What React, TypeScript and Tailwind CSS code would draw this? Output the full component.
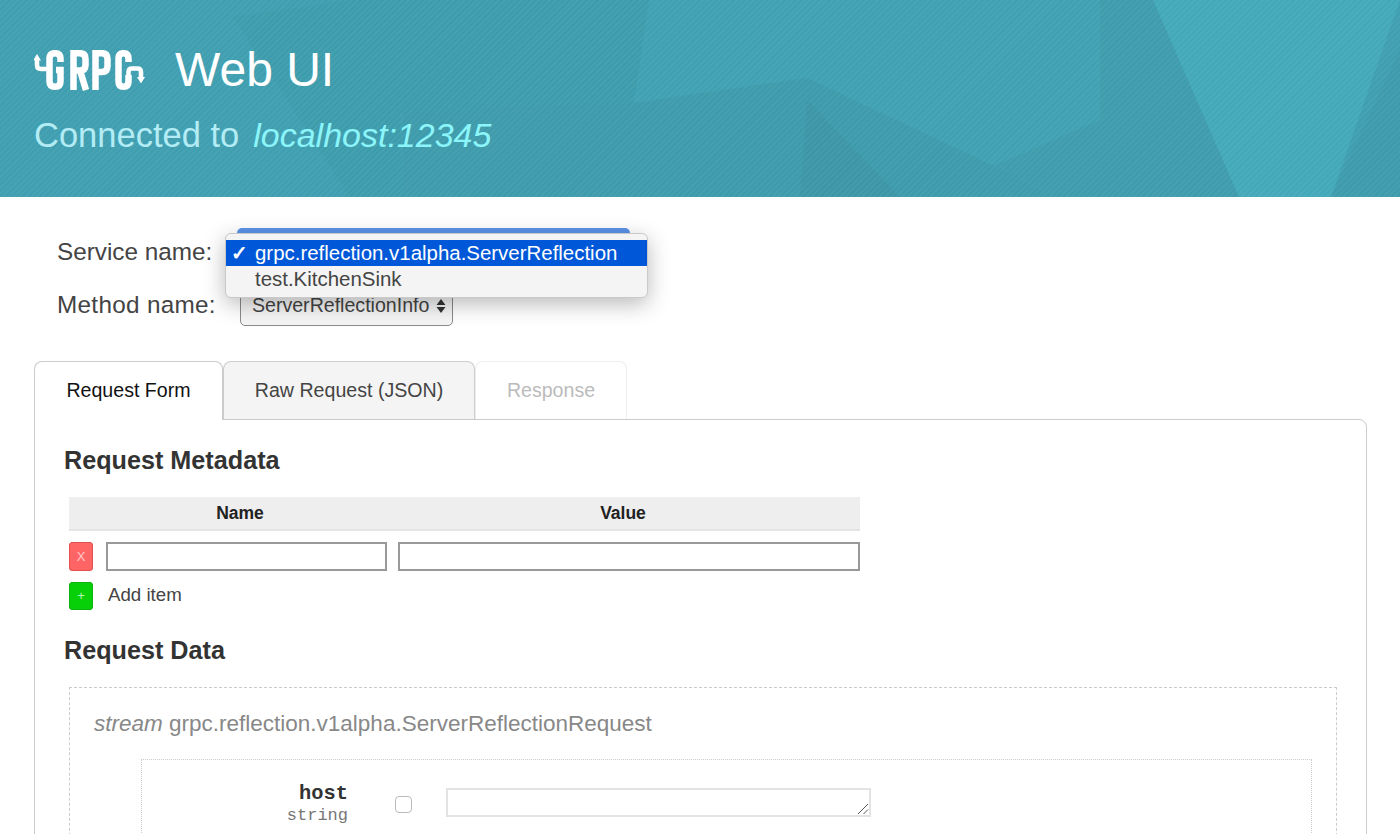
const SANS = "font-['Liberation_Sans',Arial,sans-serif]"

function GrpcLogo() {
  return (
    <svg width="112" height="41" viewBox="0 0 112 41" className="shrink-0">
      <g fill="none" stroke="#fff" strokeWidth="6.5">
        <path d="M3 10V15Q3 19 7 19H15" strokeWidth="4.5" />
        <path d="M26.5 12V8.5Q26.5 3.2 21 3.2Q15.5 3.2 15.5 8.5V31.5Q15.5 36.8 21 36.8Q26.5 36.8 26.5 31.5V20H22" />
        <path d="M39.5 40V3.2H46Q51.5 3.2 51.5 9V15Q51.5 20.5 46 20.5H39.5M46 20.5L52 40" />
        <path d="M61.5 40V3.2H68Q73.5 3.2 73.5 9V16Q73.5 22 68 22H61.5" />
        <path d="M94.5 12V8.5Q94.5 3.2 89.5 3.2Q84.5 3.2 84.5 8.5V31.5Q84.5 36.8 89.5 36.8Q94.5 36.8 94.5 31.5V25" />
        <path d="M94.5 26V22Q94.5 18.5 98 18.5H103.5Q107 18.5 107 22V27" strokeWidth="4.5" />
      </g>
      <path d="M-1 10.5H7L3 4ZM103 27H111L107 33.5Z" fill="#fff" />
    </svg>
  )
}

function HeaderBackdrop() {
  return (
    <svg className="absolute inset-0" width="1400" height="197" viewBox="0 0 1400 197">
      <rect width="1400" height="197" fill="#3f9fb0" />
      <polygon points="233,17 353,0 649,0 634,103 400,113 403,197 350,197" fill="#3d9cac" />
      <polygon points="649,0 1100,0 1100,120 994,166 807,78 634,103" fill="#40a1b2" />
      <polygon points="1100,0 1153,0 1239,197 1050,197 994,166 1100,120" fill="#3e9cac" />
      <polygon points="403,113 634,103 807,78 994,166 1050,197 403,197" fill="#3e9bab" />
      <polygon points="807,100 900,197 800,197" fill="#3c96a6" />
      <polygon points="1153,0 1400,0 1331,197 1239,197" fill="#43a9b9" />
      <polygon points="1400,50 1400,197 1331,197" fill="#3e9bab" />
    </svg>
  )
}

function Tab({ label, state }: { label: string; state: "active" | "idle" | "disabled" }) {
  if (state === "active") {
    return (
      <div className="relative z-10 -mb-px flex h-[59px] w-[189px] items-center justify-center rounded-t-lg border border-b-0 border-[#ccc] bg-white text-[19.6px] text-[#111]">
        {label}
      </div>
    )
  }
  if (state === "disabled") {
    return (
      <div className="flex h-[58px] w-[152px] items-center justify-center rounded-t-lg border border-b-0 border-[#eee] bg-white text-[19.6px] text-[#bbb]">
        {label}
      </div>
    )
  }
  return (
    <div className="flex h-[58px] w-[252px] items-center justify-center rounded-t-lg border border-b-0 border-[#ccc] bg-[#f4f4f4] text-[19.6px] text-[#444]">
      {label}
    </div>
  )
}

export default function App() {
  return (
    <div className={`${SANS} h-[834px] w-[1400px] overflow-hidden bg-white`}>
      <header className="relative h-[197px] overflow-hidden">
        <HeaderBackdrop />
        <div className="absolute inset-0 bg-[repeating-linear-gradient(135deg,rgba(255,255,255,0.045)_0px,rgba(255,255,255,0.045)_2px,transparent_2px,transparent_4px)]" />
        <div className="relative flex flex-col pl-[34px] pt-[40px]">
          <div className="flex h-[60px] items-center">
            <GrpcLogo />
            <span className="ml-[29px] text-[48px] leading-none text-white">Web UI</span>
          </div>
          <div className="mt-[10px] text-[34.5px] leading-[50px] text-[#b3ecf5]">
            Connected to
            <span className="ml-[14px] text-[34px] italic text-[#8cf5fa]">localhost:12345</span>
          </div>
        </div>
      </header>

      <section className="relative px-[57px] pt-[38px] text-[#444]">
        <div className="flex h-[34px] items-center text-[24.3px]">Service name:</div>
        <div className="mt-[17px] flex h-[40px] items-center text-[24.3px]">
          <span className="-mt-[2px] tracking-[0.3px]">Method name:</span>
          <div className="ml-[24px] flex h-[40px] w-[213px] items-center justify-between rounded-[5px] border border-[#8a8a8a] bg-[#f5f5f5] pl-[11px] pr-[6px] text-[19.6px]">
            ServerReflectionInfo
            <svg width="10" height="16" viewBox="0 0 10 16" fill="#333">
              <path d="M5 1L9.5 7H.5ZM5 15L.5 9H9.5Z" />
            </svg>
          </div>
        </div>

        <div className="absolute left-[237px] top-[31px] h-[12px] w-[393px] rounded-t-[5px] bg-[#5b93ea]" />
        <div className="absolute left-[225px] top-[36px] w-[423px] rounded-[6px] border border-[#c9c9c9] bg-[#f4f4f4] pb-[5px] pt-[6px] text-[20.45px] shadow-[0_6px_22px_rgba(0,0,0,0.28)]">
          <div className="flex h-[26px] items-center bg-[#0058d8] text-white">
            <span className="w-[29px] pl-[5px] text-[20px] font-bold leading-none">✓</span>
            grpc.reflection.v1alpha.ServerReflection
          </div>
          <div className="flex h-[26px] items-center pl-[29px] text-[#444]">test.KitchenSink</div>
        </div>
      </section>

      <section className="mt-[35px] px-[34px]">
        <div className="flex">
          <Tab label="Request Form" state="active" />
          <Tab label="Raw Request (JSON)" state="idle" />
          <Tab label="Response" state="disabled" />
        </div>
        <div className="h-[500px] w-[1333px] rounded-tr-lg border border-[#ccc] pl-[29px] pt-[23px]">
          <h2 className="text-[25.2px] font-bold leading-[34px] text-[#333]">Request Metadata</h2>
          <div className="ml-[5px] mt-[20px] w-[791px]">
            <div className="grid h-[34px] grid-cols-[342px_1fr] items-center border-b-2 border-[#e4e4e4] bg-[#eee] text-[17.5px] font-bold text-[#222]">
              <span className="text-center">Name</span>
              <span className="pr-[25px] text-center">Value</span>
            </div>
            <div className="mt-[11px] flex h-[29px] items-stretch">
              <div className="flex w-[24px] items-center justify-center rounded-[3px] border border-[#e05050] bg-[#ff6565] text-[13px] text-[#ffc8c8]">
                X
              </div>
              <div className="ml-[13px] w-[281px] border-2 border-[#999] bg-white" />
              <div className="ml-[11px] w-[462px] border-2 border-[#999] bg-white" />
            </div>
            <div className="mt-[10px] flex h-[29px] items-center">
              <div className="flex h-[28px] w-[24px] items-center justify-center rounded-[3px] border border-[#10b010] bg-[#08d008] text-[13px] text-[#b8f5b8]">
                +
              </div>
              <span className="ml-[15px] text-[18.7px] text-[#444]">Add item</span>
            </div>
          </div>
          <h2 className="mt-[23px] text-[25.2px] font-bold leading-[34px] text-[#333]">Request Data</h2>
          <div className="ml-[5px] mt-[20px] h-[300px] w-[1268px] border border-dashed border-[#ccc] pl-[24px] pr-[24px] pt-[22px]">
            <div className="text-[22.5px] leading-[28px] text-[#888]">
              <em>stream</em> grpc.reflection.v1alpha.ServerReflectionRequest
            </div>
            <div className="ml-[47px] mt-[21px] flex h-[200px] items-start border border-dotted border-[#ccc] pt-[22px]">
              <div className="w-[206px] text-right font-['Liberation_Mono',monospace]">
                <div className="text-[20.4px] font-bold leading-[24px] text-[#333]">host</div>
                <div className="text-[17px] leading-[19px] text-[#777]">string</div>
              </div>
              <div className="ml-[47px] mt-[14px] h-[17px] w-[17px] rounded-[4px] border border-[#bbb] bg-white" />
              <div className="relative ml-[34px] mt-[6px] h-[29px] w-[425px] border-2 border-[#e3e3e3] bg-white">
                <svg className="absolute bottom-0 right-0" width="12" height="12" viewBox="0 0 12 12" stroke="#555" fill="none">
                  <path d="M1 11L11 1M6.5 11L11 6.5" />
                </svg>
              </div>
            </div>
          </div>
        </div>
      </section>
    </div>
  )
}
